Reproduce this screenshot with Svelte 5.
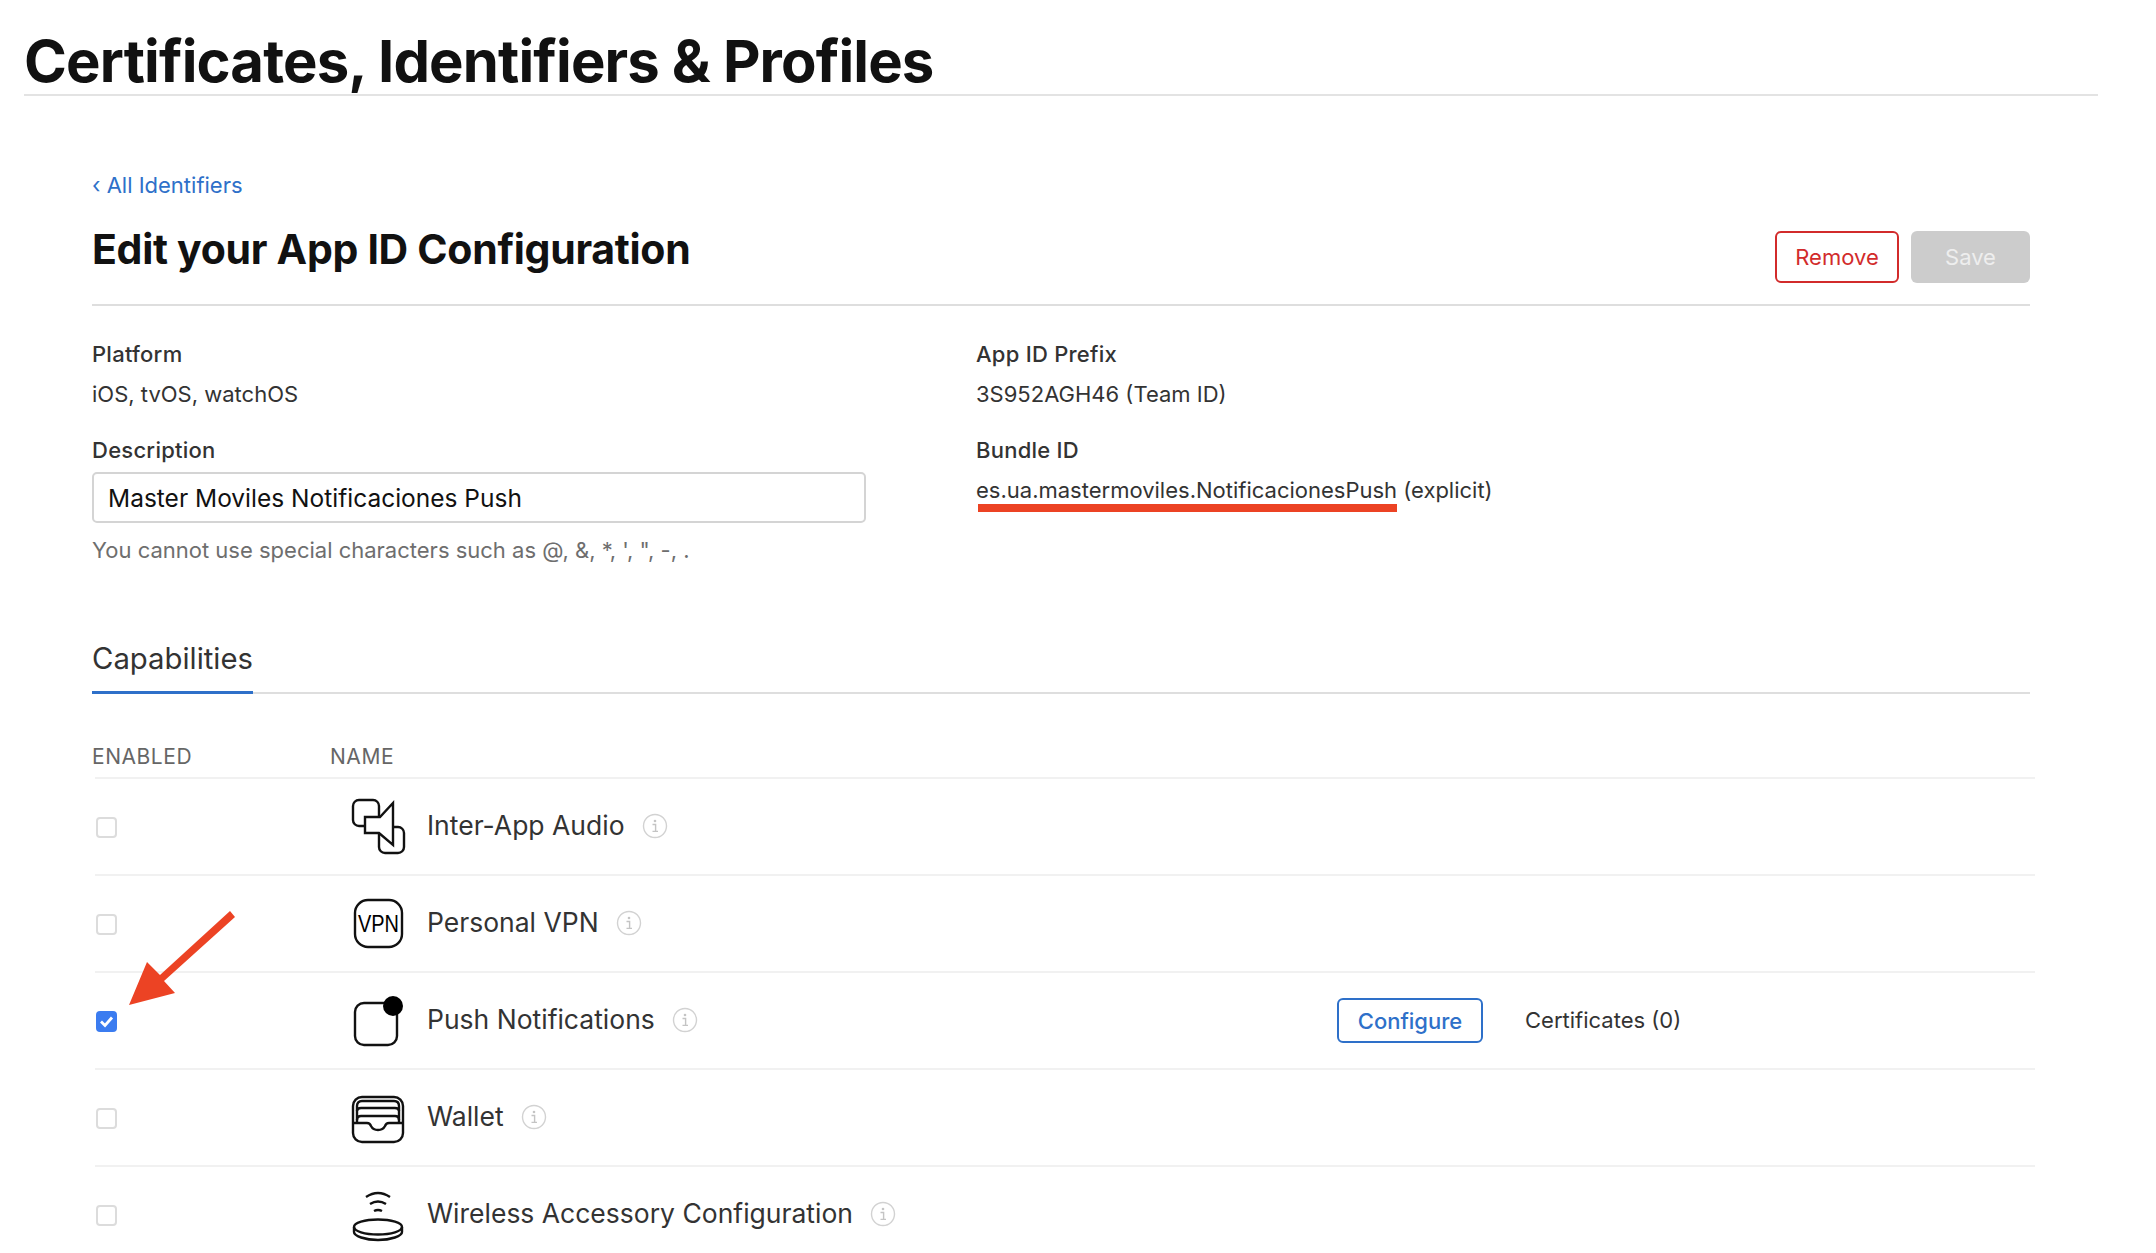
<script>
  const caps = [
    { name: "Inter-App Audio", icon: "audio" },
    { name: "Personal VPN", icon: "vpn" },
    { name: "Push Notifications", icon: "push", on: true },
    { name: "Wallet", icon: "wallet" },
    { name: "Wireless Accessory Configuration", icon: "wireless" }
  ];
</script>

<div class="page">
  <header class="top">
    <h1>Certificates, Identifiers &amp; Profiles</h1>
  </header>

  <main class="content">
    <a class="back" href="#top">‹ All Identifiers</a>
    <div class="head">
      <h2>Edit your App ID Configuration</h2>
      <div class="actions">
        <button class="btn remove">Remove</button>
        <button class="btn save">Save</button>
      </div>
    </div>

    <div class="fields">
      <div class="col">
        <div class="label">Platform</div>
        <div class="value">iOS, tvOS, watchOS</div>
        <div class="label second">Description</div>
        <input class="desc" value="Master Moviles Notificaciones Push" />
        <div class="help">You cannot use special characters such as @, &amp;, *, ', ", -, .</div>
      </div>
      <div class="col">
        <div class="label">App ID Prefix</div>
        <div class="value">3S952AGH46 (Team ID)</div>
        <div class="label second">Bundle ID</div>
        <div class="value bundle">
          <span class="marked">es.ua.mastermoviles.NotificacionesPush</span> (explicit)
        </div>
      </div>
    </div>

    <div class="tabs"><span class="tab">Capabilities</span></div>

    <div class="thead">
      <span class="th-enabled">ENABLED</span>
      <span>NAME</span>
    </div>

    <div class="rows">
      {#each caps as c}
        <div class="row">
          <span class="check" class:on={c.on}>
            {#if c.on}
              <svg viewBox="0 0 21 21" width="21" height="21"><path d="M5 10.5l4 4L16 6.5" fill="none" stroke="#fff" stroke-width="2.8" /></svg>
            {/if}
          </span>
          <svg class="icon" viewBox="0 0 64 64" width="64" height="64" fill="none" stroke="#111" stroke-width="2.4">
            {#if c.icon === "audio"}
              <rect x="7" y="5" width="26" height="26" rx="6" />
              <rect x="33" y="32" width="25" height="26" rx="6" />
              <path d="M19 22H34L47 8V50L33 38H19Z" fill="#fff" />
            {:else if c.icon === "vpn"}
              <rect x="9" y="8" width="47" height="47" rx="13" />
              <text class="vpn" x="32.5" y="40" text-anchor="middle" textLength="41" lengthAdjust="spacingAndGlyphs">VPN</text>
            {:else if c.icon === "push"}
              <rect x="9" y="14" width="42" height="42" rx="9" />
              <circle cx="47" cy="17" r="10" fill="#000" stroke="none" />
            {:else if c.icon === "wallet"}
              <rect x="7" y="11" width="50" height="45" rx="9" />
              <path d="M11 37V20q0-5 5-5H48q5 0 5 5V37" />
              <path d="M11 25q0-3 4-3H49q4 0 4 3" />
              <path d="M11 34q0-4 4-4H49q4 0 4 4" />
              <path d="M7 37H21q3 0 4 3q2 4 7 4t7-4q1-3 4-3H57" fill="#fff" />
            {:else}
              <path d="M20 14q12-8 24 0" />
              <path d="M24 21q8-5 16 0" />
              <path d="M28 28q4-2 8 0" />
              <ellipse cx="32" cy="44" rx="24" ry="7.5" />
              <path d="M8 44v5c0 4 11 8 24 8s24-4 24-8v-5" />
            {/if}
          </svg>
          <span class="name">{c.name}</span>
          <svg class="info" viewBox="0 0 26 26" width="26" height="26">
            <circle cx="13" cy="13" r="11.5" fill="none" stroke="#d2d2d2" stroke-width="1.4" />
            <circle cx="13" cy="8" r="1.3" fill="#c4c4c4" />
            <path d="M10.5 11.5H13.6V18M10.5 18.4H16" fill="none" stroke="#c4c4c4" stroke-width="1.4" />
          </svg>
          {#if c.on}
            <div class="extra">
              <button class="btn configure">Configure</button>
              <span class="certs">Certificates (0)</span>
            </div>
          {/if}
        </div>
      {/each}
    </div>
  </main>

  <!-- Annotation arrow drawn over the checkbox column -->
  <svg class="arrow" viewBox="0 0 120 110" width="120" height="110">
    <path d="M108 3L113 9L42 73L53 85L7 97L25 54L38 67Z" fill="#ec4324" />
  </svg>
</div>

<style>
  :global(body) {
    margin: 0;
    background: #fff;
  }
  .page {
    position: relative;
    height: 1253px;
    overflow: hidden;
    font-family: Inter, "Noto Sans", sans-serif;
    color: #333;
  }
  .top {
    margin: 0 58px 0 24px;
    height: 94px;
    border-bottom: 2px solid #e3e3e3;
  }
  h1 {
    margin: 0;
    padding-top: 26px;
    font-size: 58px;
    line-height: 70px;
    font-weight: 700;
    letter-spacing: -0.85px;
    color: #111;
    white-space: nowrap;
  }
  .content {
    padding: 0 126px 0 92px;
  }
  .back {
    display: block;
    margin-top: 74px;
    font-size: 22px;
    line-height: 30px;
    color: #2e70c9;
    text-decoration: none;
  }
  .head {
    display: flex;
    justify-content: space-between;
    height: 104px;
    border-bottom: 2px solid #dedede;
  }
  h2 {
    margin: 0;
    padding-top: 24px;
    font-size: 41px;
    line-height: 50px;
    font-weight: 700;
    letter-spacing: -0.3px;
    color: #111;
  }
  .actions {
    display: flex;
    gap: 12px;
    padding-top: 31px;
    align-items: flex-start;
  }
  .btn {
    font-family: inherit;
    font-size: 22px;
    border-radius: 6px;
    background: #fff;
    cursor: pointer;
    box-sizing: border-box;
  }
  .remove {
    width: 124px;
    height: 52px;
    border: 2px solid #d22b2b;
    color: #d22b2b;
  }
  .save {
    width: 119px;
    height: 52px;
    border: none;
    background: #ccc;
    color: #eee;
  }
  .fields {
    display: flex;
    padding-top: 33px;
  }
  .col {
    width: 884px;
    flex: none;
  }
  .label {
    font-size: 22px;
    line-height: 30px;
    font-weight: 500;
    letter-spacing: 0.25px;
    color: #333;
  }
  .label.second {
    margin-top: 26px;
  }
  .value {
    margin-top: 10px;
    font-size: 22px;
    line-height: 30px;
    color: #333;
  }
  .bundle {
    position: relative;
  }
  .marked {
    position: relative;
  }
  .marked::after {
    content: "";
    position: absolute;
    left: 2px;
    right: 0;
    bottom: -9px;
    height: 8px;
    background: #ec4324;
  }
  .desc {
    display: block;
    box-sizing: border-box;
    width: 774px;
    height: 51px;
    margin-top: 7px;
    padding: 0 14px;
    border: 2px solid #d4d4d4;
    border-radius: 5px;
    font-family: inherit;
    font-size: 24.5px;
    color: #111;
    outline: none;
  }
  .help {
    margin-top: 12px;
    font-size: 22px;
    line-height: 30px;
    color: #6e6e6e;
  }
  .tabs {
    margin-top: 59px;
    border-bottom: 2px solid #dedede;
    height: 70px;
    box-sizing: border-box;
  }
  .tab {
    display: inline-block;
    height: 70px;
    box-sizing: border-box;
    padding-top: 15px;
    font-size: 29.3px;
    line-height: 40px;
    color: #333;
    border-bottom: 3px solid #2e70c9;
  }
  .thead {
    display: flex;
    margin-top: 49px;
    font-size: 21px;
    line-height: 28px;
    letter-spacing: 0.55px;
    color: #666;
  }
  .th-enabled {
    width: 238px;
  }
  .rows {
    margin-top: 6px;
    margin-right: -5px;
    margin-left: 3px;
  }
  .row {
    display: flex;
    align-items: center;
    height: 97px;
    box-sizing: border-box;
    border-top: 2px solid #f1f1f1;
  }
  .check {
    flex: none;
    width: 21px;
    height: 21px;
    margin: 2px 229px 0 1px;
    box-sizing: border-box;
    border: 2px solid #dcdcdc;
    border-radius: 4px;
    background: #fff;
  }
  .check.on {
    border: none;
    background: #3b7cf0;
  }
  .check svg {
    display: block;
  }
  .icon {
    flex: none;
  }
  .vpn {
    font-family: "Liberation Sans", sans-serif;
    font-size: 23px;
    fill: #000;
    stroke: none;
  }
  .name {
    margin-left: 17px;
    margin-bottom: 3px;
    font-size: 26.5px;
    color: #333;
    white-space: nowrap;
  }
  .info {
    flex: none;
    margin-left: 17px;
    margin-bottom: 2px;
  }
  .extra {
    position: absolute;
    left: 1337px;
    display: flex;
    align-items: center;
    gap: 42px;
  }
  .configure {
    width: 146px;
    height: 45px;
    border: 2px solid #2e70c9;
    color: #2e70c9;
    font-weight: 500;
    font-size: 22px;
  }
  .certs {
    font-size: 22px;
    margin-bottom: 1px;
    color: #333;
  }
  .arrow {
    position: absolute;
    left: 122px;
    top: 908px;
  }
</style>
